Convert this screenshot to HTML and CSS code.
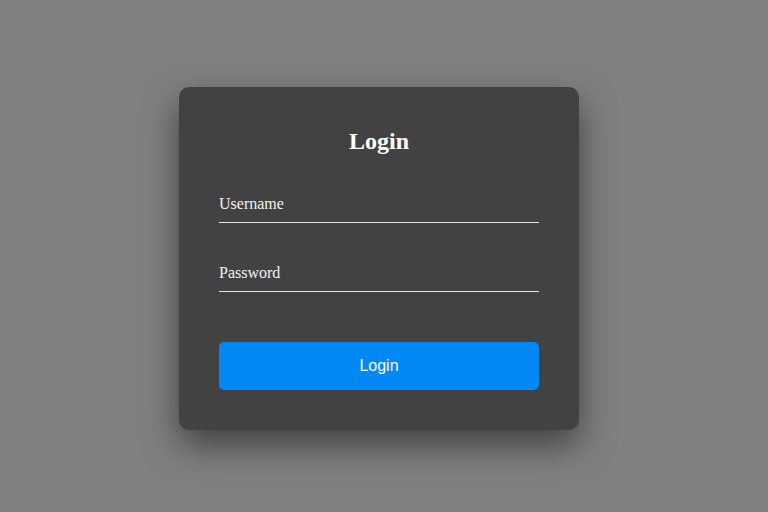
FILE: index.html
```html
<!DOCTYPE html>
<html>
<head>
<meta charset="utf-8">
<link rel="stylesheet" href="styles.css">
</head>
<body>
<div class="card">
  <h2 class="title">Login</h2>
  <div class="field field-user"><span class="label">Username</span></div>
  <div class="field field-pass"><span class="label">Password</span></div>
  <button class="btn">Login</button>
</div>
</body>
</html>
```
FILE: styles.css
```css
html, body {
  margin: 0;
  height: 100%;
}
body {
  background: #808080;
  display: flex;
  align-items: center;
  justify-content: center;
  padding: 5px 10px 0 0;
  box-sizing: border-box;
  font-family: "Liberation Serif", "Times New Roman", serif;
}
.card {
  width: 400px;
  box-sizing: border-box;
  padding: 40px;
  background: #424242;
  border-radius: 10px;
  box-shadow: 0 15px 35px rgba(0, 0, 0, 0.5);
  display: flex;
  flex-direction: column;
}
.title {
  margin: 0 0 40px;
  font-size: 24px;
  line-height: 28px;
  font-weight: bold;
  text-align: center;
  color: #fff;
}
.field {
  padding-bottom: 9px;
  border-bottom: 1px solid #e6e6e6;
}
.field-pass {
  margin-top: 41px;
}
.label {
  display: block;
  font-size: 16px;
  line-height: 18px;
  color: #f2f2f2;
}
.btn {
  margin-top: 50px;
  height: 48px;
  border: none;
  border-radius: 5px;
  background: #0288f4;
  color: #fff;
  font-family: "Liberation Sans", Arial, sans-serif;
  font-size: 16px;
  padding: 0;
}
```
